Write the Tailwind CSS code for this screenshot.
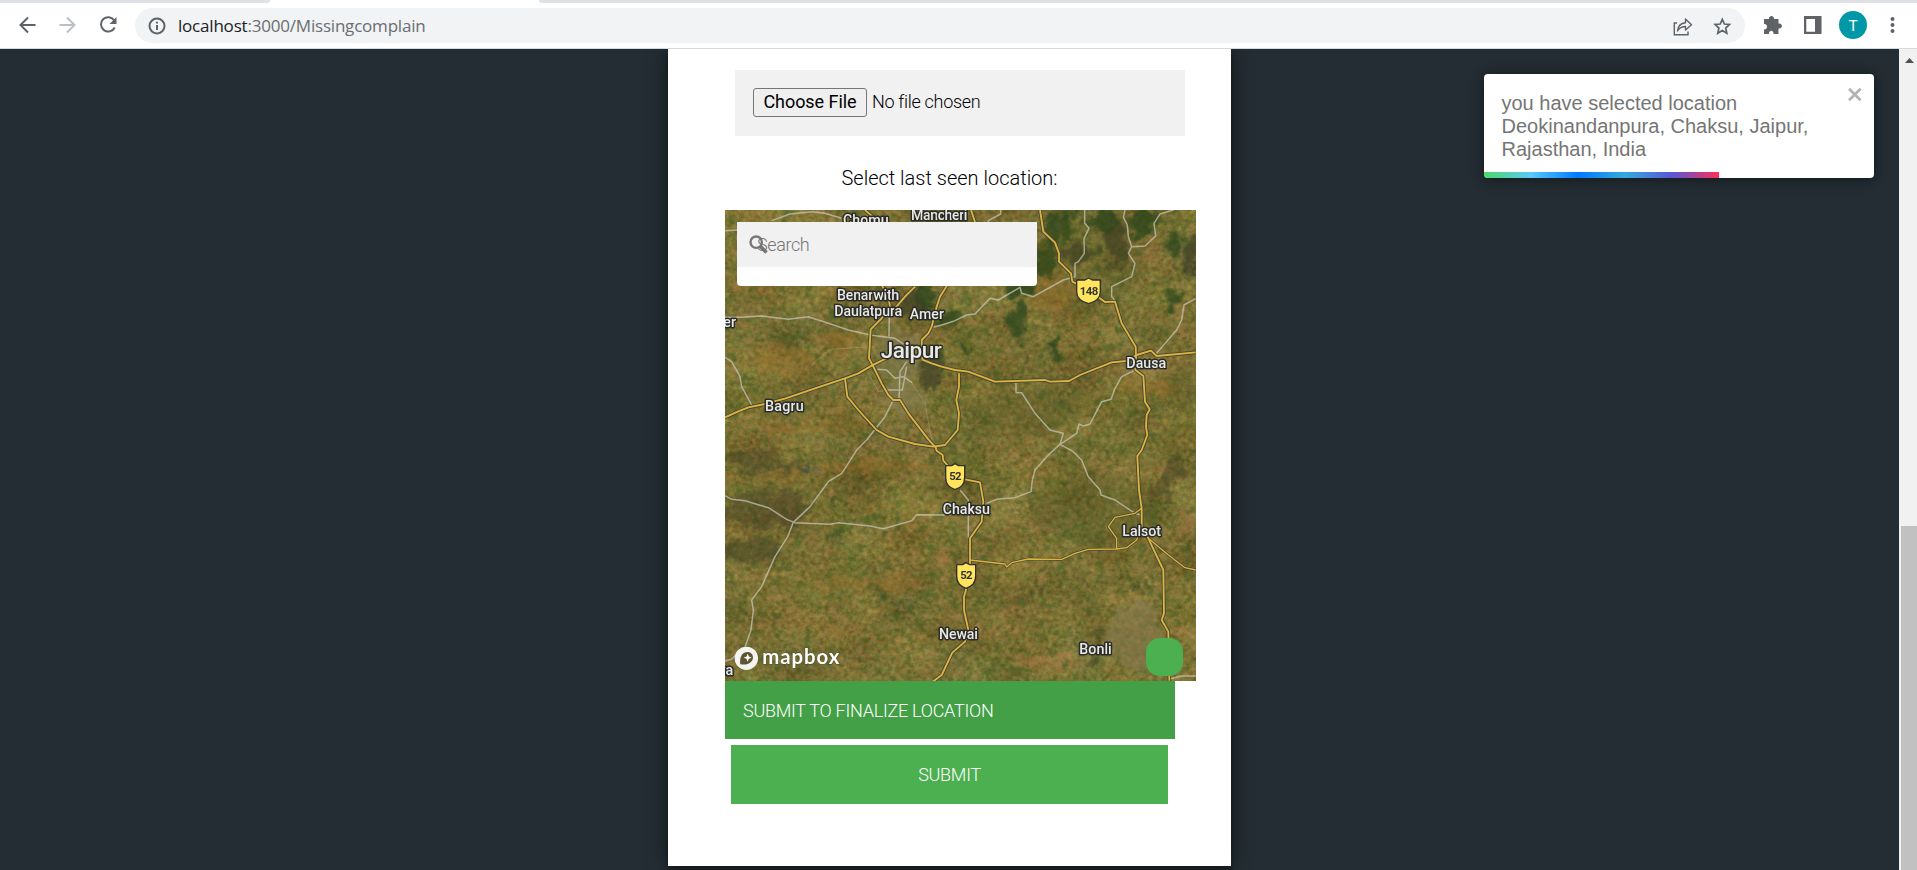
<!DOCTYPE html>
<html lang="en">
<head>
<meta charset="utf-8">
<title>Missing complain</title>
<script src="https://cdn.jsdelivr.net/npm/@tailwindcss/browser@4"></script>
</head>
<body class="h-[870px] w-[1917px] overflow-hidden flex flex-col bg-[#232d33] font-[Roboto,sans-serif]">
<!-- Browser toolbar -->
<header class="h-[49px] shrink-0 bg-white border-b border-[#d5d8dc] flex flex-col">
  <div class="h-[3px] flex justify-between">
    <div class="w-[270px] bg-[#dee1e6] rounded-br-[6px]"></div>
    <div class="w-[1378px] bg-[#dee1e6] rounded-bl-[6px]"></div>
  </div>
  <div class="flex-1 flex items-start pt-[5px]">
    <svg class="w-[135px] h-[35px] shrink-0" viewBox="0 8 135 35" fill="none" stroke-width="2">
      <path d="M35.500 25H20.500M28 17.500L20.500 25L28 32.500" stroke="#5f6368"/>
      <path d="M59.500 25H74.500M67 17.500L74.500 25L67 32.500" stroke="#bdc0c3"/>
      <path d="M114.300 20.500A7.200 7.200 0 1 0 114.700 27.500" stroke="#5f6368"/>
      <path d="M116.500 17V24H109.500Z" fill="#5f6368"/>
    </svg>
    <div class="w-[1610px] h-[35px] rounded-full bg-[#f1f3f4] flex items-center shrink-0">
      <svg class="w-[18px] h-[18px] ml-[13px]" viewBox="0 0 18 18" fill="none" stroke="#5f6368"><circle cx="9" cy="9" r="7.500" stroke-width="2"/><path d="M9 8V13M9 4.800V6.600" stroke-width="2"/></svg>
      <div class="ml-[12px] text-[17px] leading-[24px] tracking-[-0.2px] font-['Open_Sans',sans-serif] text-[#6a6e73] whitespace-nowrap"><span class="text-[#202124]">localhost</span>:3000/Missingcomplain</div>
      <svg class="ml-auto mr-[13px] w-[60px] h-[20px]" viewBox="1672 15 60 20" fill="none" stroke="#5f6368" stroke-width="1.400">
        <path d="M1677 22H1674.300V33.700H1688V30.500"/><path d="M1677.500 30C1678 24.500 1681 22 1685.500 21.700V18L1691.500 23.800L1685.500 29V25.500C1682 25.500 1679.500 26.500 1677.500 30Z" stroke-linejoin="round"/>
        <path d="M1722.300 18.300L1724.400 23L1729.500 23.500L1725.700 27L1726.800 32.200L1722.300 29.500L1717.800 32.200L1718.900 27L1715.100 23.500L1720.200 23Z" stroke-width="1.700"/>
      </svg>
    </div>
    <svg class="w-[172px] h-[35px]" viewBox="1745 8 172 35" fill="#5f6368">
      <path d="M1765.500 19H1769C1768.500 15 1774.500 15 1774 19H1778.500V23.500C1783 23 1783 29 1778.500 28.500V34H1773.500C1774 29.500 1768.500 29.500 1769 34H1764V29.500C1768 29.500 1768 23.800 1764 24V19Z"/>
      <path fill-rule="evenodd" d="M1804 16H1821.500V34H1804ZM1806.300 19V31.700H1815V19Z"/>
      <circle cx="1853" cy="25" r="14" fill="#0097a7"/>
      <text x="1853" y="30.500" font-size="15.500" text-anchor="middle" fill="#fff">T</text>
      <circle cx="1892.500" cy="19" r="2"/><circle cx="1892.500" cy="25" r="2"/><circle cx="1892.500" cy="31" r="2"/>
    </svg>
  </div>
</header>

<div class="flex-1 flex min-h-0 relative overflow-hidden">
  <main class="w-[1899px] flex justify-center items-start">
    <section class="w-[563px] h-[817px] bg-white shadow-[0_0_20px_rgba(0,0,0,0.45),0_5px_6px_rgba(0,0,0,0.3)] pt-[21px] flex flex-col items-start">
      <div class="ml-[67px] w-[450px] h-[66px] bg-[#f1f1f1] flex items-center pl-[18px] pb-[1px] gap-[5px]">
        <button class="w-[114px] h-[29px] border border-[#767676] rounded-[3px] bg-[#efefef] text-black text-[18px] leading-[24px] pb-[1px] tracking-[-0.05px] text-center whitespace-nowrap">Choose File</button>
        <span class="text-[18px] leading-[26px] pb-[1px] tracking-[-0.3px] font-light text-black">No file chosen</span>
      </div>
      <p class="w-full mt-[27px] mb-[17px] h-[30px] leading-[30px] text-center text-[20px] font-light text-black">Select last seen location:</p>
      <div class="ml-[57px] w-[471px] h-[471px] relative overflow-hidden bg-[#75682f]">
        <svg class="block w-[471px] h-[471px]" viewBox="30 30 1413 1413">
          <defs>
            <filter id="land" x="0" y="0" width="100%" height="100%" color-interpolation-filters="sRGB">
              <feTurbulence type="fractalNoise" baseFrequency="0.006 0.009" numOctaves="6" seed="8"/>
              <feColorMatrix values=".38 .06 0 0 .25  .2 .22 0 0 .225  .14 .12 .08 0 .03  0 0 0 0 1"/>
            </filter>
            <filter id="grain" x="0" y="0" width="100%" height="100%" color-interpolation-filters="sRGB">
              <feTurbulence type="fractalNoise" baseFrequency="0.07" numOctaves="3" seed="21"/>
              <feColorMatrix values=".7 .2 0 0 .03  .35 .45 0 0 .035  .25 .25 .2 0 -.15  0 0 0 0 1"/>
            </filter>
            <filter id="specks" x="0" y="0" width="100%" height="100%" color-interpolation-filters="sRGB">
              <feTurbulence type="fractalNoise" baseFrequency="0.03 0.035" numOctaves="4" seed="33"/>
              <feColorMatrix values="0 0 0 0 .27  0 0 0 0 .37  0 0 0 0 .14  5 0 0 0 -2.8"/>
            </filter>
            <filter id="fields" x="0" y="0" width="100%" height="100%" color-interpolation-filters="sRGB">
              <feTurbulence type="fractalNoise" baseFrequency="0.024 0.034" numOctaves="4" seed="57"/>
              <feColorMatrix values="0 0 0 0 .68  0 0 0 0 .53  0 0 0 0 .33  0 5 0 0 -2.9"/>
            </filter>
            <filter id="rough" x="-30%" y="-30%" width="160%" height="160%">
              <feTurbulence type="fractalNoise" baseFrequency="0.02" numOctaves="4" seed="4" result="n"/>
              <feGaussianBlur in="SourceGraphic" stdDeviation="8" result="b"/>
              <feDisplacementMap in="b" in2="n" scale="80" xChannelSelector="R" yChannelSelector="G"/>
            </filter>
            <g id="highways">
              <path d="M30 652L75 632L100 622L150 612L212 595L300 565L390 535L430 520L470 497L500 482L525 470M620 478L650 490L680 500L720 510L760 515L840 545L990 540L1005 545L1062 543L1095 525L1190 487L1235 483L1265 465L1308 452L1325 468L1442 457"/>
              <path d="M450 30L490 65M500 255L520 290L525 320L500 355L467 388L465 420L462 475L475 500L490 530L500 550L520 585L535 600H555L580 640L640 718L662 742L665 752L683 765L685 782L697 795L720 830L750 838L795 847L805 905L800 965L765 1015V1090L753 1125V1170L747 1190V1230L760 1290L750 1325L712 1358L680 1425L655 1444"/>
              <path d="M600 260L570 290L540 325L520 340M695 258L675 290L665 320L650 380L640 400L620 420L622 478M768 30L780 66"/>
              <path d="M390 535L397 590L430 630L485 690L520 710L600 732L655 740L690 735L728 690L732 640L724 600L732 560V520"/>
              <path d="M975 30L985 95L1020 128L1032 160V185L1068 220L1072 245L1120 270L1170 306L1200 305L1220 370L1262 440L1263 470L1261 510L1285 528L1290 605L1304 628L1295 645L1293 680L1297 705L1280 750L1267 768L1272 870L1280 925V980L1300 1015L1345 1110L1347 1240L1340 1260L1360 1295L1363 1442"/>
            </g>
            <path id="branches" d="M1300 1015L1360 1065L1410 1103L1442 1110M765 1080L870 1092L875 1101L890 1088L940 1077L1040 1078L1080 1060L1120 1048L1205 1047L1235 1043L1265 1020L1275 990M1280 925L1260 940L1200 952L1180 980L1205 1015V1047"/>
          </defs>
          <rect x="30" y="30" width="1413" height="1413" filter="url(#land)"/>
          <rect x="30" y="30" width="1413" height="1413" filter="url(#grain)" opacity=".4"/>
          <rect x="30" y="30" width="1413" height="1413" filter="url(#specks)" opacity=".5"/>
          <rect x="30" y="30" width="1413" height="1413" filter="url(#fields)" opacity=".38"/>
          <!-- forests and hills -->
          <g filter="url(#rough)" fill="#28451b">
            <g opacity=".75">
              <ellipse cx="1055" cy="75" rx="22" ry="55"/><ellipse cx="985" cy="190" rx="32" ry="50"/>
              <ellipse cx="1010" cy="85" rx="22" ry="60"/><ellipse cx="1165" cy="60" rx="55" ry="25"/>
              <ellipse cx="1285" cy="70" rx="40" ry="45"/><ellipse cx="920" cy="265" rx="45" ry="30"/>
              <ellipse cx="905" cy="370" rx="26" ry="55"/><ellipse cx="1020" cy="450" rx="20" ry="28"/>
              <ellipse cx="750" cy="440" rx="16" ry="30"/><ellipse cx="635" cy="300" rx="28" ry="65"/>
              <ellipse cx="700" cy="360" rx="35" ry="28"/><ellipse cx="1375" cy="130" rx="20" ry="45"/>
              <ellipse cx="1380" cy="290" rx="25" ry="30"/><ellipse cx="1275" cy="1160" rx="20" ry="14"/>
            </g>
            <g fill="#353a26" opacity=".65">
              <ellipse cx="1205" cy="130" rx="28" ry="75"/><ellipse cx="1430" cy="170" rx="22" ry="70"/>
              <ellipse cx="645" cy="510" rx="22" ry="75"/><ellipse cx="1100" cy="160" rx="60" ry="28"/>
              <ellipse cx="600" cy="310" rx="40" ry="40"/>
            </g>
            <g fill="#4b4f1c" opacity=".28">
              <ellipse cx="1150" cy="930" rx="200" ry="110"/><ellipse cx="930" cy="640" rx="150" ry="80"/><ellipse cx="1400" cy="560" rx="50" ry="80"/><ellipse cx="1130" cy="180" rx="160" ry="120"/>
            </g>
            <g fill="#453f20" opacity=".5">
              <ellipse cx="180" cy="800" rx="110" ry="18"/><ellipse cx="110" cy="765" rx="90" ry="14"/>
              <ellipse cx="160" cy="930" rx="140" ry="60"/><ellipse cx="110" cy="1050" rx="90" ry="40"/>
              <ellipse cx="1360" cy="840" rx="25" ry="90" transform="rotate(30 1360 840)"/>
              <ellipse cx="1140" cy="1340" rx="14" ry="80" transform="rotate(20 1140 1340)"/>
            </g>
            <g fill="#a8702f" opacity=".34">
              <ellipse cx="190" cy="835" rx="140" ry="14"/><ellipse cx="200" cy="480" rx="90" ry="50"/>
              <ellipse cx="120" cy="250" rx="70" ry="30"/><ellipse cx="1010" cy="280" rx="65" ry="45"/>
              <ellipse cx="1290" cy="560" rx="90" ry="25"/><ellipse cx="370" cy="420" rx="70" ry="30"/>
              <ellipse cx="470" cy="800" rx="160" ry="20"/><ellipse cx="450" cy="1150" rx="180" ry="18"/>
              <ellipse cx="300" cy="680" rx="160" ry="20"/>
            </g>
            <g fill="#b5794c" opacity=".5">
              <ellipse cx="1400" cy="970" rx="12" ry="60" transform="rotate(30 1400 970)"/><ellipse cx="680" cy="1080" rx="28" ry="20"/>
              <ellipse cx="1400" cy="390" rx="35" ry="12"/><ellipse cx="1410" cy="1290" rx="30" ry="12"/><ellipse cx="980" cy="1380" rx="130" ry="12"/>
            </g>
            <g fill="#857d52" opacity=".55">
              <ellipse cx="1260" cy="1310" rx="80" ry="100"/><ellipse cx="560" cy="470" rx="70" ry="80"/><ellipse cx="560" cy="590" rx="60" ry="50"/>
            </g>
            <g fill="#2c4825" opacity=".8"><ellipse cx="368" cy="1010" rx="14" ry="10"/><ellipse cx="490" cy="1185" rx="8" ry="28"/><ellipse cx="552" cy="1232" rx="8" ry="14"/><ellipse cx="284" cy="798" rx="11" ry="12" fill="#345"/><ellipse cx="350" cy="905" rx="8" ry="9"/></g>
          </g>
          <!-- minor roads -->
          <g fill="none" stroke="#c9c8b8" stroke-width="4.500" stroke-linejoin="round" opacity=".72">
            <path d="M30 352H75L140 348L220 358L280 350L340 370L400 390L470 406L540 415L565 432"/>
            <path d="M170 62L225 42L290 35L330 40L380 55M30 92L66 90M30 472L50 485L75 530L80 560L110 615"/>
            <path d="M523 340L522 410M488 508L515 510L540 535L565 530L592 548M575 485L555 515L552 600M515 570H562L575 500"/>
            <path d="M535 600L510 650L455 720L425 750L400 790L380 820L340 845L285 920L235 967L218 1010L180 1070L140 1160L110 1200L115 1230L108 1290L90 1340"/>
            <path d="M30 887L50 898L90 902L160 923L215 958L240 968L345 973L370 968L465 978L505 986L590 962L605 944L690 945"/>
            <path d="M815 910L845 898L900 893L948 875L952 840L960 810L1000 765L1035 733L1085 700L1092 672L1105 678L1125 672L1160 605L1188 598L1200 565L1220 530L1261 510"/>
            <path d="M903 548V578H920L960 640L1005 690L1045 700L1035 733L1075 755L1100 780L1120 830L1155 870L1158 885L1200 900L1260 940L1280 946"/>
            <path d="M1109 30V70L1122 85L1107 115L1108 160L1090 185L1080 190V230L1045 240L955 290L920 280L915 262L850 300L825 295L780 342L755 345L720 362L680 375L655 382"/>
            <path d="M1230 30L1225 52L1237 75L1240 110L1250 140L1240 160L1260 190L1250 230L1190 260V290L1202 303M1250 140L1290 138L1322 108L1317 70L1335 42L1375 30"/>
            <path d="M1442 296L1407 315L1400 360L1385 390L1320 465M735 870L760 900V1015M30 1383L50 1378L62 1365M1363 1437L1400 1428H1442M820 95V62L857 42V30"/>
            <path d="M290 495L330 460L350 448L420 443L480 440M465 530L490 575L530 568M590 548L630 610L650 718M1430 30L1442 35" stroke-width="2.500" opacity=".5"/>
          </g>
          <!-- highways: dark casing, then yellow core -->
          <g fill="none" stroke-linejoin="round">
            <g stroke="#494535"><use href="#highways" stroke-width="11"/><use href="#branches" stroke-width="8"/></g>
            <g stroke="#dcb53e"><use href="#highways" stroke-width="5.500"/><use href="#branches" stroke-width="4"/></g>
          </g>
          <!-- route shields -->
          <g fill="#ffe45c" stroke="#2f2f2f" stroke-width="4" stroke-linejoin="round">
            <path d="M1085 240H1110L1121 234L1132 240H1156V275C1156 298 1140 306 1121 311C1102 306 1085 298 1085 275Z"/>
            <path d="M692 797H710L720 791L731 797H749V832C749 855 737 863 720 869C704 863 692 855 692 832Z"/>
            <path d="M725 1094H743L753 1088L764 1094H782V1128C782 1151 770 1159 753 1165C737 1159 725 1151 725 1128Z"/>
          </g>
          <g font-family="Roboto" font-weight="700" font-size="34" fill="#333" text-anchor="middle">
            <text x="1122" y="284" textLength="56">148</text><text x="721" y="841" textLength="37">52</text><text x="754" y="1137" textLength="37">52</text>
          </g>
          <!-- place names -->
          <g font-family="Roboto" font-weight="500" font-size="43" fill="#e9e9e6" stroke="#2b2b28" stroke-width="9" stroke-linejoin="round" paint-order="stroke">
            <text x="384" y="74" textLength="137">Chomu</text>
            <text x="588" y="60" textLength="169">Mancheri</text>
            <text x="366" y="301" textLength="187">Benarwith</text>
            <text x="358" y="348" textLength="204">Daulatpura</text>
            <text x="584" y="357" textLength="103">Amer</text>
            <text x="497" y="475" textLength="183" font-size="68">Jaipur</text>
            <text x="150" y="633" textLength="116">Bagru</text>
            <text x="25" y="381" textLength="38">er</text>
            <text x="1234" y="504" textLength="120">Dausa</text>
            <text x="683" y="943" textLength="142">Chaksu</text>
            <text x="1222" y="1008" textLength="116">Lalsot</text>
            <text x="672" y="1318" textLength="117">Newai</text>
            <text x="1093" y="1363" textLength="97">Bonli</text>
            <text x="20" y="1425" textLength="35">ra</text>
          </g>
          <!-- mapbox mark -->
          <circle cx="94" cy="1375" r="35" fill="#fff" fill-opacity=".93"/>
          <path d="M76 1393C72 1368 84 1355 99 1356C112 1357 118 1371 111 1382C104 1392 91 1395 76 1393Z" fill="#5e5734"/>
          <path d="M98 1361L101.500 1369.500L110 1373L101.500 1376.500L98 1385L94.500 1376.500L86 1373L94.500 1369.500Z" fill="#fff"/>
          <text x="142" y="1392" textLength="231" font-family="Lato" font-weight="700" font-size="61" fill="#fff" stroke="#4d472c" stroke-opacity=".5" stroke-width="5" paint-order="stroke">mapbox</text>
        </svg>
        <div class="absolute left-[12px] top-[12px] w-[300px] h-[64px] rounded-[4px] rounded-t-none bg-white">
          <div class="h-[45px] bg-[#f1f1f1] flex items-center pl-[20px] text-[18px] tracking-[-0.4px] font-light text-[#757575]">Search</div>
          <svg class="absolute left-[12px] top-[13px] w-[20px] h-[19px]" viewBox="0 0 20 19" fill="none" stroke="#757575"><circle cx="7.200" cy="7.200" r="5.700" stroke-width="2.300"/><path d="M11 11L17.500 17.500" stroke-width="3.600"/></svg>
        </div>
        <div class="absolute left-[421px] top-[428px] w-[37px] h-[38px] rounded-[14px] bg-[#4caf50]"></div>
      </div>
      <button class="ml-[57px] w-[450px] h-[58px] bg-[#43a047] text-white font-light text-[18px] tracking-[-0.26px] text-left pl-[18px]">SUBMIT TO FINALIZE LOCATION</button>
      <button class="ml-[63px] mt-[6px] w-[437px] h-[59px] bg-[#4caf50] text-white font-light text-[18px] tracking-[-0.28px]">SUBMIT</button>
    </section>
  </main>
  <!-- Scrollbar -->
  <div class="w-[18px] bg-[#f1f1f1] flex flex-col justify-between items-end">
    <svg class="w-[18px] h-[18px]" viewBox="0 0 18 18"><path d="M6 14L10.500 9L15 14Z" fill="#505050"/></svg>
    <div class="w-[16px] h-[344px] bg-[#c1c1c1]"></div>
  </div>
  <!-- Notification -->
  <aside class="absolute left-[1484px] top-[25px] w-[390px] h-[104px] rounded-[4px] overflow-hidden bg-white shadow-[0_1px_10px_rgba(0,0,0,0.3),0_2px_15px_rgba(0,0,0,0.2)]">
    <p class="pl-[17.500px] pt-[18px] w-[350px] text-[20px] leading-[23px] font-['Liberation_Sans',sans-serif] text-[#757575]">you have selected location Deokinandanpura, Chaksu, Jaipur, Rajasthan, India</p>
    <svg class="absolute left-[364px] top-[14px] w-[14px] h-[13px]" viewBox="0 0 14 13" stroke="#b3b3b3" stroke-width="2.700"><path d="M1 .7L12.600 12.300M12.600 .7L1 12.300"/></svg>
    <div class="absolute left-0 bottom-0 w-[235px] h-[6px] bg-[linear-gradient(to_right,#4cd964,#5ac8fa,#007aff,#34aadc,#5856d6,#ff2d55)]"></div>
  </aside>
</div>
</body>
</html>
